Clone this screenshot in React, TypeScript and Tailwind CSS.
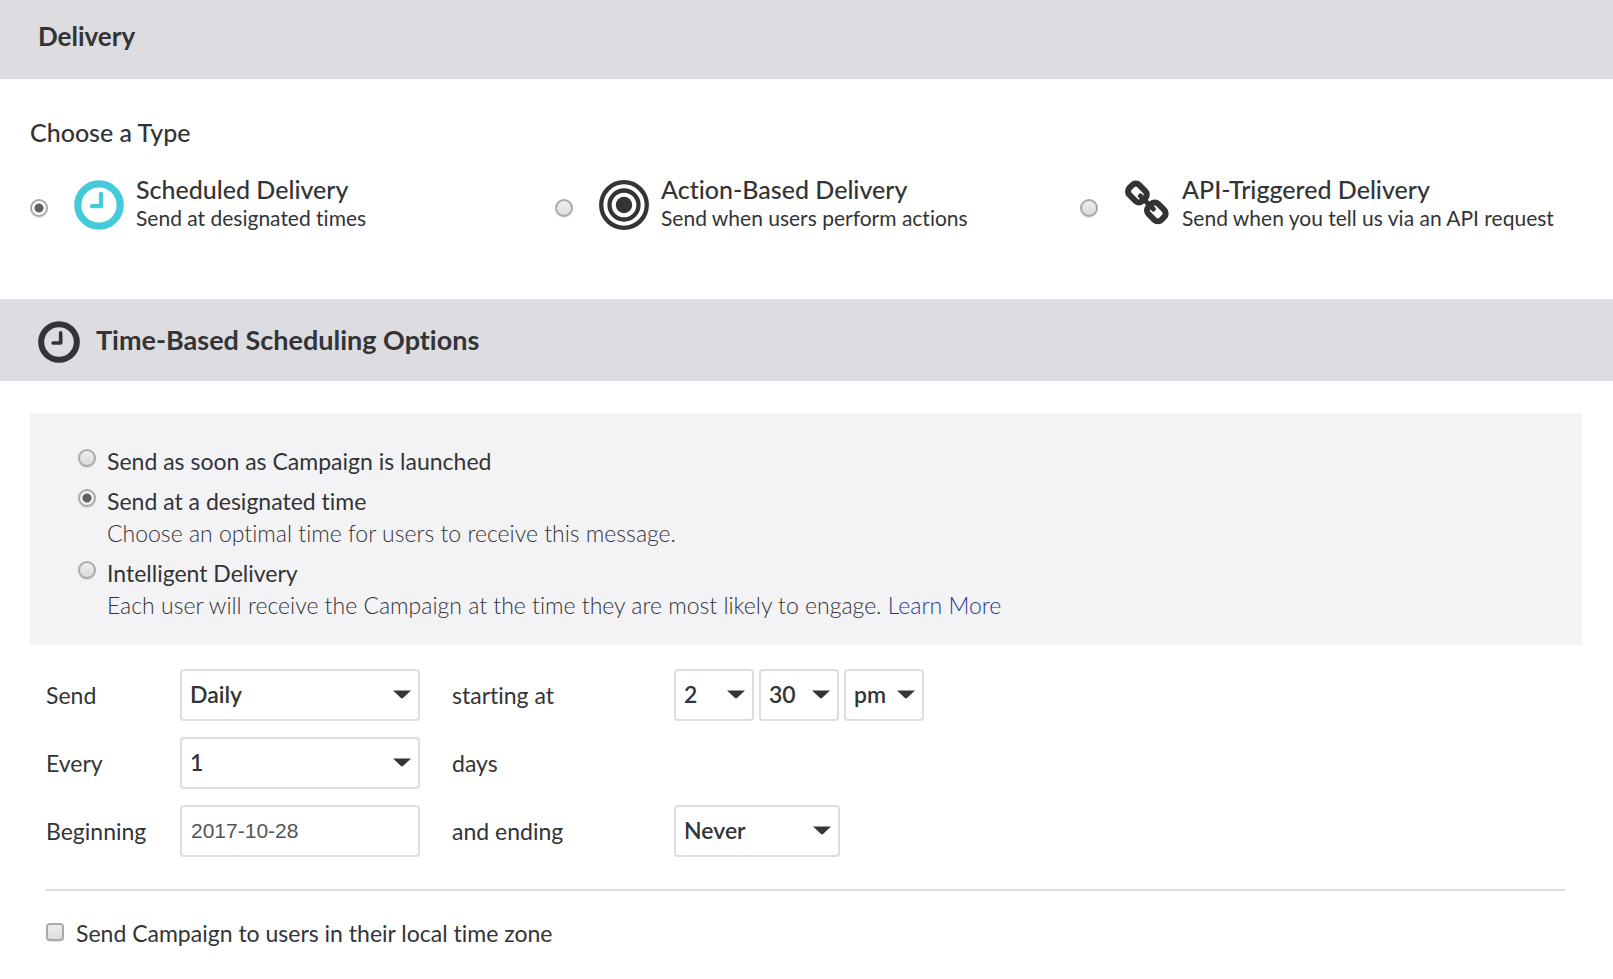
import { useState } from "react";
import type { ReactNode } from "react";

type Option = { id: string; title: string; text: string; icon: ReactNode };

const radioClass =
  "size-[18px] shrink-0 appearance-none rounded-full border-2 border-[#aaaaaa] bg-linear-to-b from-[#eeeeee] to-[#dcdcdc] shadow-[0_1px_1px_rgba(0,0,0,0.12)] checked:bg-[radial-gradient(circle,#606060_0,#606060_4px,transparent_5px)]";

function ClockIcon({ className }: { className: string }) {
  return (
    <svg viewBox="0 0 50 50" className={className} fill="none" stroke="currentColor" aria-hidden="true">
      <circle cx="25" cy="25" r="21.2" strokeWidth="7.2" />
      <path d="M27 14v12.2h-9" strokeWidth="4.3" strokeLinecap="round" strokeLinejoin="round" />
    </svg>
  );
}

function TargetIcon({ className }: { className: string }) {
  return (
    <svg viewBox="0 0 50 50" className={className} fill="none" stroke="currentColor" strokeWidth="4.3" aria-hidden="true">
      <circle cx="25" cy="25" r="22.8" />
      <circle cx="25" cy="25" r="14.5" />
      <circle cx="25" cy="25" r="8.2" fill="currentColor" stroke="none" />
    </svg>
  );
}

function ChainIcon({ className }: { className: string }) {
  return (
    <svg viewBox="0 0 46 50" className={className} fill="none" stroke="currentColor" aria-hidden="true">
      <rect x="4.2" y="6" width="18.4" height="14" rx="5" strokeWidth="6" transform="rotate(45 13.4 13)" />
      <rect x="23.1" y="24.9" width="18.4" height="14" rx="5" strokeWidth="6" transform="rotate(45 32.3 31.9)" />
      <path d="M16.4 16l13 13" strokeWidth="5" strokeLinecap="round" />
    </svg>
  );
}

const deliveryTypes: Option[] = [
  { id: "scheduled", title: "Scheduled Delivery", text: "Send at designated times", icon: <ClockIcon className="size-[50px] text-[#43cbdb]" /> },
  { id: "action", title: "Action-Based Delivery", text: "Send when users perform actions", icon: <TargetIcon className="size-[50px]" /> },
  { id: "api", title: "API-Triggered Delivery", text: "Send when you tell us via an API request", icon: <ChainIcon className="h-[50px] w-[46px]" /> },
];

function Select({ label, options, className }: { label: string; options: string[]; className: string }) {
  return (
    <div className={`relative ${className}`}>
      <select
        aria-label={label}
        className="block h-[52px] w-full appearance-none rounded border-2 border-[#dddce1] bg-white pb-0.5 pl-2 text-[23px] font-semibold text-[#333436]"
      >
        {options.map((o) => (
          <option key={o}>{o}</option>
        ))}
      </select>
      <svg viewBox="0 0 18 9" className="pointer-events-none absolute top-[21px] right-[9px] h-[9px] w-[18px]" fill="currentColor" aria-hidden="true">
        <path d="M0 0.5h18L10 8Q9 8.8 8 8z" />
      </svg>
    </div>
  );
}

export default function App() {
  const [type, setType] = useState("scheduled");
  const [when, setWhen] = useState("designated");

  return (
    <main className="min-h-screen bg-white pb-7 font-['Lato',sans-serif] text-[#333436] [font-variant-ligatures:none]">
      <header className="flex h-[79px] items-center bg-[#dddce1] px-[38px] pb-2">
        <h1 className="text-[26px] leading-8 font-bold">Delivery</h1>
      </header>

      <fieldset className="px-[30px] pt-[39px] pb-[63px]">
        <legend className="float-left mb-7 w-full text-[25px] leading-7 font-medium">Choose a Type</legend>
        <div className="clear-both grid grid-cols-[525fr_525fr_503fr]">
          {deliveryTypes.map((d) => (
            <label key={d.id} className="flex items-center">
              <input type="radio" name="type" className={`${radioClass} mt-1.5`} checked={type === d.id} onChange={() => setType(d.id)} />
              <span className="ml-[26px] shrink-0">{d.icon}</span>
              <span className="mb-1 ml-3 flex flex-col whitespace-nowrap">
                <span className="text-[25px] leading-[30px] font-medium">{d.title}</span>
                <span className="text-[21px] leading-7">{d.text}</span>
              </span>
            </label>
          ))}
        </div>
      </fieldset>

      <header className="flex h-[82px] items-center gap-4 bg-[#dddce1] px-[38px]">
        <ClockIcon className="mt-1 size-[42px]" />
        <h2 className="text-[27px] leading-8 font-bold">Time-Based Scheduling Options</h2>
      </header>

      <section className="pt-8 pr-[31px] pl-[30px]">
        <div className="flex flex-col gap-2 bg-[#f3f3f6] px-12 pt-8 pb-6 text-[23px] leading-8">
          <label className="flex gap-[11px]">
            <input type="radio" name="when" className={`${radioClass} mt-1`} checked={when === "now"} onChange={() => setWhen("now")} />
            <span>Send as soon as Campaign is launched</span>
          </label>
          <label className="flex gap-[11px]">
            <input type="radio" name="when" className={`${radioClass} mt-1`} checked={when === "designated"} onChange={() => setWhen("designated")} />
            <span className="flex flex-col">
              Send at a designated time
              <span className="font-light">Choose an optimal time for users to receive this message.</span>
            </span>
          </label>
          <div className="flex gap-[11px]">
            <input id="intelligent" type="radio" name="when" className={`${radioClass} mt-1`} checked={when === "intelligent"} onChange={() => setWhen("intelligent")} />
            <div>
              <label htmlFor="intelligent">Intelligent Delivery</label>
              <p className="font-light">
                Each user will receive the Campaign at the time they are most likely to engage.{" "}
                <a href="#learn-more" className="text-[#263a91]">Learn More</a>
              </p>
            </div>
          </div>
        </div>

        <div className="px-4 pt-6 text-[23px] leading-8">
          <div className="grid grid-cols-[134px_240px_32px_222px_1fr] items-center gap-y-4 border-b-2 border-[#dddce1] pb-8">
            <span>Send</span>
            <Select label="Send" options={["Daily", "Weekly", "Monthly"]} className="w-60" />
            <span className="col-start-4">starting at</span>
            <div className="flex gap-[5px]">
              <Select label="Hour" options={["2", "3", "4"]} className="w-20" />
              <Select label="Minute" options={["30", "45"]} className="w-20" />
              <Select label="am or pm" options={["pm", "am"]} className="w-20" />
            </div>
            <span>Every</span>
            <Select label="Every" options={["1", "2", "3"]} className="w-60" />
            <span className="col-span-2 col-start-4">days</span>
            <label htmlFor="beginning">Beginning</label>
            <input
              id="beginning"
              type="text"
              defaultValue="2017-10-28"
              className="h-[52px] w-60 rounded border-2 border-[#dddce1] bg-white px-[9px] font-['Liberation_Sans',sans-serif] text-[21px] text-[#555555]"
            />
            <span className="col-start-4">and ending</span>
            <Select label="and ending" options={["Never", "On"]} className="w-[166px]" />
          </div>
          <label className="mt-[26px] flex items-start gap-3">
            <input
              type="checkbox"
              className="mt-1.5 size-[18px] shrink-0 appearance-none rounded border-2 border-[#aaaaaa] bg-linear-to-b from-[#eeeeee] to-[#dcdcdc] shadow-[0_1px_1px_rgba(0,0,0,0.12)] checked:bg-[#606060]"
            />
            Send Campaign to users in their local time zone
          </label>
        </div>
      </section>
    </main>
  );
}
